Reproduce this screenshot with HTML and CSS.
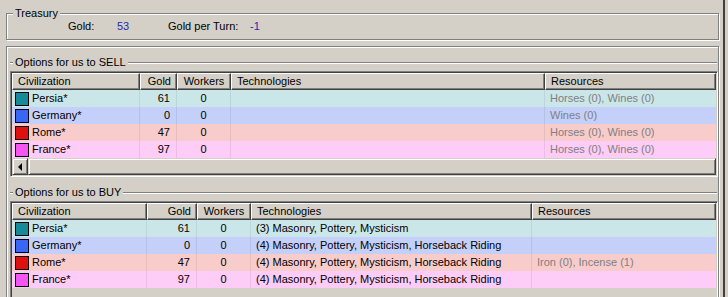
FILE: index.html
```html
<!DOCTYPE html>
<html lang="en">
<head>
  <meta charset="utf-8">
  <title>Diplomacy - Trade</title>
  <link rel="stylesheet" href="styles.css">
</head>
<body>
  <div class="window">
    <div class="treasury">
      <span class="group-label">Treasury</span>
      <div class="treasury-row">
        <span>Gold:</span><span class="num">53</span>
        <span>Gold per Turn:</span><span class="num">-1</span>
      </div>
    </div>
    <div class="panel">
      <div class="group-line"><span class="group-label">Options for us to SELL</span></div>
      <div class="listview sell">
        <table>
          <colgroup>
            <col style="width:128px"><col style="width:37px"><col style="width:54px"><col style="width:314px"><col style="width:171px">
          </colgroup>
          <thead>
            <tr><th>Civilization</th><th class="right">Gold</th><th class="center">Workers</th><th>Technologies</th><th>Resources</th></tr>
          </thead>
          <tbody>
            <tr class="persia"><td><i class="swatch"></i>Persia*</td><td class="right">61</td><td class="center">0</td><td></td><td class="res">Horses (0), Wines (0)</td></tr>
            <tr class="germany"><td><i class="swatch"></i>Germany*</td><td class="right">0</td><td class="center">0</td><td></td><td class="res">Wines (0)</td></tr>
            <tr class="rome"><td><i class="swatch"></i>Rome*</td><td class="right">47</td><td class="center">0</td><td></td><td class="res">Horses (0), Wines (0)</td></tr>
            <tr class="france"><td><i class="swatch"></i>France*</td><td class="right">97</td><td class="center">0</td><td></td><td class="res">Horses (0), Wines (0)</td></tr>
          </tbody>
        </table>
        <div class="hscroll"><span class="arrow"><b></b></span><span class="thumb"></span></div>
      </div>
      <div class="group-line buy-line"><span class="group-label">Options for us to BUY</span></div>
      <div class="listview buy">
        <table>
          <colgroup>
            <col style="width:135px"><col style="width:50px"><col style="width:54px"><col style="width:281px"><col style="width:184px">
          </colgroup>
          <thead>
            <tr><th>Civilization</th><th class="right">Gold</th><th class="center">Workers</th><th>Technologies</th><th>Resources</th></tr>
          </thead>
          <tbody>
            <tr class="persia"><td><i class="swatch"></i>Persia*</td><td class="right">61</td><td class="center">0</td><td>(3) Masonry, Pottery, Mysticism</td><td class="res"></td></tr>
            <tr class="germany"><td><i class="swatch"></i>Germany*</td><td class="right">0</td><td class="center">0</td><td>(4) Masonry, Pottery, Mysticism, Horseback Riding</td><td class="res"></td></tr>
            <tr class="rome"><td><i class="swatch"></i>Rome*</td><td class="right">47</td><td class="center">0</td><td>(4) Masonry, Pottery, Mysticism, Horseback Riding</td><td class="res">Iron (0), Incense (1)</td></tr>
            <tr class="france"><td><i class="swatch"></i>France*</td><td class="right">97</td><td class="center">0</td><td>(4) Masonry, Pottery, Mysticism, Horseback Riding</td><td class="res"></td></tr>
          </tbody>
        </table>
      </div>
    </div>
  </div>
</body>
</html>
```

FILE: styles.css
```css
html,body{
  margin: 0;
  padding: 0;
  background: #d4d0c8;
  font-family: "Liberation Sans", Arial, sans-serif;
  font-size: 11px;
  color: #000;
}
*{
  box-sizing: border-box;
}
.window{
  width: 725px;
  height: 297px;
  overflow: hidden;
  border-right: 2px solid #404040;
}
.group-label{
  position: absolute;
  top: -7px;
  left: 3px;
  padding: 0 2px;
  line-height: 13px;
  background: #d4d0c8;
}
.treasury{
  position: relative;
  margin: 13px 0 0 6px;
  width: 713px;
  height: 27px;
  border: 1px solid #808080;
  box-shadow: inset 1px 1px #fff, 1px 1px #fff;
}
.treasury .group-label{
  left: 6px;
}
.treasury-row{
  display: grid;
  grid-template-columns: 49px 51px 82px auto;
  padding: 6px 0 0 61px;
  line-height: 13px;
}
.treasury-row .num{
  color: #2a2aa8;
}
.panel{
  margin: 6px 0 0 6px;
  width: 713px;
  height: 260px;
  border: 1px solid #808080;
  box-shadow: inset 1px 1px #fff, 1px 1px #fff;
  padding: 15px 0 0 3px;
}
.group-line{
  position: relative;
  width: 707px;
  height: 2px;
  border-top: 1px solid #808080;
  border-bottom: 1px solid #fff;
}
.buy-line{
  margin-top: 15px;
}
.listview{
  margin-top: 7px;
  width: 708px;
  padding: 1px;
  border: 1px solid;
  border-color: #808080 #fff #fff #808080;
  box-shadow: inset 1px 1px #404040, inset -1px -1px #d4d0c8;
  background: #d4d0c8;
}
.listview.buy{
  height: 110px;
  overflow: hidden;
}
table{
  width: 704px;
  table-layout: fixed;
  border-collapse: separate;
  border-spacing: 0;
}
th{
  height: 17px;
  padding: 0 5px;
  line-height: 15px;
  font-weight: normal;
  text-align: left;
  white-space: nowrap;
  overflow: hidden;
  border: 1px solid;
  border-color: #fff #404040 #404040 #fff;
  box-shadow: inset -1px -1px #808080;
  background: #d4d0c8;
}
td{
  height: 17px;
  padding: 0 5px;
  line-height: 17px;
  white-space: nowrap;
  overflow: hidden;
  border-right: 1px solid rgba(0,0,0,0.07);
}
td:last-child{
  border-right: 0;
}
td:first-child{
  padding-left: 3px;
}
.right{
  text-align: right;
}
.center{
  text-align: center;
}
td.right{
  padding-right: 6px;
}
.res{
  color: #808080;
}
.swatch{
  display: inline-block;
  width: 14px;
  height: 14px;
  margin: 0 3px 0 0;
  vertical-align: -4px;
  border: 1px solid #000;
}
.persia{ background: #cbe6e9; }
.germany{ background: #c4d0fa; }
.rome{ background: #f9cccc; }
.france{ background: #fdccf7; }
.persia .swatch{ background: #178a9a; }
.germany .swatch{ background: #3a66f5; }
.rome .swatch{ background: #e01010; }
.france .swatch{ background: #f555f0; }
.hscroll{
  display: flex;
  height: 17px;
  background: #e6e3de;
}
.arrow,.thumb{
  border: 1px solid;
  border-color: #d4d0c8 #404040 #404040 #d4d0c8;
  box-shadow: inset 1px 1px #fff, inset -1px -1px #808080;
  background: #d4d0c8;
}
.arrow{
  width: 16px;
  display: flex;
  align-items: center;
  justify-content: center;
}
.arrow b{
  width: 0;
  height: 0;
  border-top: 4px solid transparent;
  border-bottom: 4px solid transparent;
  border-right: 4px solid #000;
}
.thumb{
  flex: 1;
}
```
